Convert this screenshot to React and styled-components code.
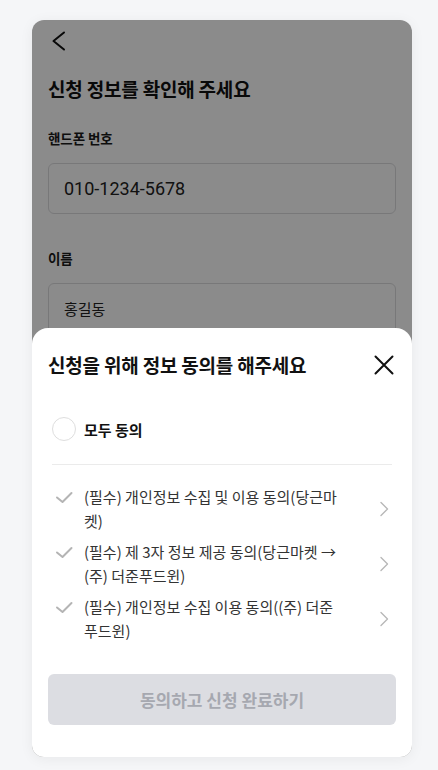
import React from "react";
import styled, { createGlobalStyle } from "styled-components";

const GlobalStyle = createGlobalStyle`
  * { box-sizing: border-box; }
  body {
    margin: 0;
    background: #f5f6f8;
    font-family: "Noto Sans CJK KR", "Noto Sans", sans-serif;
    color: #1a1a1a;
  }
`;

const StyledPage = styled.div`
  padding: 20px 0 13px 32px;
`;

const StyledCard = styled.div`
  position: relative;
  width: 380px;
  height: 737px;
  background: #ffffff;
  border-radius: 12px;
  overflow: hidden;
  box-shadow: 0 2px 14px rgba(0, 0, 0, 0.06);
`;

const StyledForm = styled.div`
  display: flex;
  flex-direction: column;
  padding: 0 16px;
`;

const StyledHeader = styled.div`
  display: flex;
  align-items: center;
  height: 42px;
`;

const StyledIconButton = styled.button`
  display: flex;
  align-items: center;
  justify-content: center;
  width: 24px;
  height: 24px;
  padding: 0;
  border: 0;
  background: none;
  color: #111;
`;

const StyledTitle = styled.h1`
  margin: ${props => props.top || 0}px 0 0;
  font-family: "Noto Sans CJK KR", sans-serif;
  font-size: 19px;
  font-weight: 700;
  line-height: 26px;
  letter-spacing: -0.2px;
  color: #111;
`;

const StyledLabel = styled.div`
  margin-top: ${props => props.top}px;
  font-family: "Noto Sans CJK KR", sans-serif;
  font-size: 13.5px;
  font-weight: 700;
  line-height: 20px;
  letter-spacing: -0.1px;
`;

const StyledInput = styled.div`
  display: flex;
  align-items: center;
  height: 51px;
  margin-top: 15px;
  padding: 0 15px;
  border: 1px solid #dcdcde;
  border-radius: 6px;
  font-family: ${props => props.numeric ? "Roboto, sans-serif" : "\"Noto Sans CJK KR\", sans-serif"};
  font-size: ${props => props.numeric ? 18 : 15}px;
  color: #222;
`;

const StyledDim = styled.div`
  position: absolute;
  inset: 0;
  background: rgba(0, 0, 0, 0.455);
`;

const StyledSheet = styled.div`
  position: absolute;
  left: 0;
  right: 0;
  bottom: 0;
  display: flex;
  flex-direction: column;
  padding: 24px 16px 32px;
  background: #ffffff;
  border-radius: 16px 16px 0 0;
`;

const StyledSheetHead = styled.div`
  display: flex;
  align-items: center;
  justify-content: space-between;
`;

const StyledAllRow = styled.div`
  display: flex;
  align-items: center;
  gap: 8px;
  height: 48px;
  margin: 27px 4px 0;
`;

const StyledCircle = styled.span`
  width: 24px;
  height: 24px;
  border: 1px solid #dedede;
  border-radius: 50%;
`;

const StyledAllText = styled.span`
  font-family: "Noto Sans CJK KR", sans-serif;
  font-size: 15px;
  font-weight: 700;
  color: #111;
`;

const StyledDivider = styled.hr`
  margin: 11px 4px 0;
  border: 0;
  border-top: 1px solid #ebebeb;
`;

const StyledList = styled.div`
  display: flex;
  flex-direction: column;
  gap: 7px;
  margin: 20px 4px 0;
`;

const StyledItem = styled.div`
  display: grid;
  grid-template-columns: 24px 1fr 16px;
  align-items: center;
  column-gap: 8px;
`;

const StyledCheck = styled.span`
  align-self: start;
  display: flex;
  height: 24px;
  align-items: center;
`;

const StyledItemText = styled.span`
  padding-right: 26px;
  font-family: "Noto Sans CJK KR", sans-serif;
  font-size: 15px;
  line-height: 24px;
  color: #333;
`;

const StyledSubmit = styled.button`
  height: 51px;
  margin-top: 31px;
  border: 0;
  border-radius: 6px;
  background: #dcdde2;
  font-family: "Noto Sans CJK KR", sans-serif;
  font-size: 17px;
  font-weight: 700;
  color: #a6a8b0;
`;

const BackIcon = () => (
  <svg width="24" height="24" viewBox="0 0 24 24" fill="none">
    <path d="M16 3.5 L5.5 12 L16 20.5" stroke="currentColor" strokeWidth="2" strokeLinecap="round" strokeLinejoin="round" />
  </svg>
);

const CloseIcon = () => (
  <svg width="24" height="24" viewBox="0 0 24 24" fill="none">
    <path d="M3.5 3.5 L20.5 20.5 M20.5 3.5 L3.5 20.5" stroke="#111" strokeWidth="2" strokeLinecap="round" />
  </svg>
);

const CheckIcon = () => (
  <svg width="24" height="24" viewBox="0 0 24 24" fill="none">
    <path d="M5 12.5 L10.5 17 L19.5 8" stroke="#b4b4b4" strokeWidth="2" strokeLinecap="round" strokeLinejoin="round" />
  </svg>
);

const ChevronIcon = () => (
  <svg width="16" height="16" viewBox="0 0 16 16" fill="none">
    <path d="M5 1.5 L11.5 8 L5 14.5" stroke="#b8b8b8" strokeWidth="1.4" strokeLinecap="round" strokeLinejoin="round" />
  </svg>
);

const terms = [
  "(필수) 개인정보 수집 및 이용 동의(당근마켓)",
  "(필수) 제 3자 정보 제공 동의(당근마켓 → (주) 더준푸드윈)",
  "(필수) 개인정보 수집 이용 동의((주) 더준푸드윈)",
];

const TermRow = ({ text }) => (
  <StyledItem>
    <StyledCheck><CheckIcon /></StyledCheck>
    <StyledItemText>{text}</StyledItemText>
    <ChevronIcon />
  </StyledItem>
);

const App = () => {
  return (
    <StyledPage>
      <GlobalStyle />
      <StyledCard>
        <StyledForm>
          <StyledHeader>
            <StyledIconButton><BackIcon /></StyledIconButton>
          </StyledHeader>
          <StyledTitle top={14}>신청 정보를 확인해 주세요</StyledTitle>
          <StyledLabel top={26}>핸드폰 번호</StyledLabel>
          <StyledInput numeric>010-1234-5678</StyledInput>
          <StyledLabel top={34}>이름</StyledLabel>
          <StyledInput>홍길동</StyledInput>
        </StyledForm>
        <StyledDim />
        <StyledSheet>
          <StyledSheetHead>
            <StyledTitle>신청을 위해 정보 동의를 해주세요</StyledTitle>
            <StyledIconButton><CloseIcon /></StyledIconButton>
          </StyledSheetHead>
          <StyledAllRow>
            <StyledCircle />
            <StyledAllText>모두 동의</StyledAllText>
          </StyledAllRow>
          <StyledDivider />
          <StyledList>
            {terms.map((text) => <TermRow key={text} text={text} />)}
          </StyledList>
          <StyledSubmit>동의하고 신청 완료하기</StyledSubmit>
        </StyledSheet>
      </StyledCard>
    </StyledPage>
  );
};

export default App;
